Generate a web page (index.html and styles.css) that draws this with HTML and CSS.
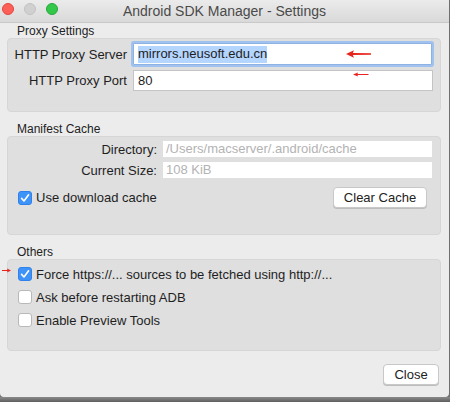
FILE: index.html
```html
<!DOCTYPE html>
<html>
<head>
<meta charset="utf-8">
<link rel="stylesheet" href="styles.css">
</head>
<body>
<div class="window">
  <div class="titlebar">
    <div class="lights">
      <span class="light red"></span>
      <span class="light gray"></span>
      <span class="light green"></span>
    </div>
    <div class="title">Android SDK Manager - Settings</div>
  </div>
  <div class="content">
    <div class="legend">Proxy Settings</div>
    <div class="group proxy">
      <label class="flabel">HTTP Proxy Server</label>
      <div class="field focused"><span class="sel">mirrors.neusoft.edu.cn</span></div>
      <label class="flabel">HTTP Proxy Port</label>
      <div class="field">80</div>
    </div>

    <div class="legend">Manifest Cache</div>
    <div class="group cache">
      <div class="cache-grid">
        <label class="flabel">Directory:</label>
        <div class="field disabled">/Users/macserver/.android/cache</div>
        <label class="flabel">Current Size:</label>
        <div class="field disabled">108 KiB</div>
      </div>
      <div class="cache-row">
        <div class="check-row"><span class="cb checked"><svg viewBox="0 0 14 14" width="14" height="14"><path d="M3.6 7.4 L6 10 L10.6 3.8" fill="none" stroke="#fff" stroke-width="1.6" stroke-linecap="round" stroke-linejoin="round"/></svg></span><span>Use download cache</span></div>
        <button class="btn clear">Clear Cache</button>
      </div>
    </div>

    <div class="legend">Others</div>
    <div class="group others">
      <div class="check-row"><span class="cb checked"><svg viewBox="0 0 14 14" width="14" height="14"><path d="M3.6 7.4 L6 10 L10.6 3.8" fill="none" stroke="#fff" stroke-width="1.6" stroke-linecap="round" stroke-linejoin="round"/></svg></span><span>Force https://... sources to be fetched using http://...</span></div>
      <div class="check-row"><span class="cb"></span><span>Ask before restarting ADB</span></div>
      <div class="check-row"><span class="cb"></span><span>Enable Preview Tools</span></div>
    </div>

    <div class="footer"><button class="btn close">Close</button></div>
  </div>

  <svg class="arrow a1" width="26" height="8" viewBox="0 0 26 8"><path d="M0 4 L8 0.3 L6.8 3 L25 3.2 L25 4.8 L6.8 5 L8 7.7 Z" fill="#e8231b"/></svg>
  <svg class="arrow a2" width="16" height="5" viewBox="0 0 16 5"><path d="M0 2.5 L5 0.6 L4.5 2 L15.5 2 L15.5 3 L4.5 3 L5 4.4 Z" fill="#e8231b"/></svg>
  <svg class="arrow a3" width="9" height="5" viewBox="0 0 9 5"><path d="M9 2.5 L5 0.6 L5.4 2 L0 2 L0 3 L5.4 3 L5 4.4 Z" fill="#e8231b"/></svg>
</div>
<div class="shadow"></div>
</body>
</html>
```
FILE: styles.css
```css
html, body {
  margin: 0;
  padding: 0;
  background: #6f6f6f;
}
body {
  width: 450px;
  height: 402px;
  overflow: hidden;
  font-family: "Liberation Sans", Arial, sans-serif;
  font-size: 13px;
  color: #1e1e1e;
}
.window {
  position: relative;
  width: 449px;
  height: 397px;
  background: #ececec;
  border-radius: 0 0 4px 4px;
  display: flex;
  flex-direction: column;
}
.titlebar {
  height: 22px;
  border-bottom: 1px solid #c9c9c9;
  background: linear-gradient(#ebebeb, #d9d9d9);
  display: flex;
  align-items: center;
  position: relative;
}
.lights {
  display: flex;
  gap: 10px;
  padding-left: 2px;
  margin-top: -4px;
}
.light {
  width: 12px;
  height: 12px;
  border-radius: 50%;
  box-sizing: border-box;
}
.light.red { background: #fc5f57; border: 1px solid #e2463f; }
.light.gray { background: #d0d0d0; border: 1px solid #c2c2c2; }
.light.green { background: #34c84a; border: 1px solid #28a73a; }
.title {
  position: absolute;
  left: 0;
  right: 0;
  top: 3px;
  text-align: center;
  font-size: 14px;
  color: #4a4a4a;
}
.content {
  flex: 1;
  display: flex;
  flex-direction: column;
  padding: 1px 8px 0 7px;
}
.legend {
  font-size: 12px;
  line-height: 14px;
  padding-left: 10px;
  height: 14px;
  color: #222;
}
.group {
  background: #dfdfdf;
  border: 1px solid #d6d6d6;
  border-radius: 4px;
  box-sizing: border-box;
  width: 434px;
}
.proxy {
  height: 74px;
  display: grid;
  grid-template-columns: 119px 1fr;
  column-gap: 6px;
  row-gap: 5px;
  align-content: start;
  padding: 4px 7px 0 0;
  margin-bottom: 10px;
}
.flabel {
  text-align: right;
  align-self: center;
  white-space: nowrap;
}
.field {
  background: #fff;
  border: 1px solid #c4c4c4;
  height: 21px;
  box-sizing: border-box;
  padding: 0 4px;
  line-height: 19px;
  font-size: 13px;
  white-space: nowrap;
  overflow: hidden;
}
.field.focused {
  height: 22px;
  border: 1px solid #8db2e3;
  box-shadow: 0 0 0 2px #9fc2ee;
  border-radius: 1px;
  margin-right: 1px;
  line-height: 20px;
}
.sel {
  background: #b4d5fe;
  padding: 0 0 2px 0;
}
.cache {
  height: 99px;
  padding: 4px 8px 0 0;
  margin-bottom: 10px;
}
.cache-grid {
  display: grid;
  grid-template-columns: 149px 1fr;
  column-gap: 6px;
  row-gap: 5px;
}
.field.disabled {
  border: none;
  height: 16px;
  line-height: 16px;
  color: #b3b3b3;
  padding-left: 3px;
}
.cache-row {
  display: flex;
  justify-content: space-between;
  align-items: center;
  margin-top: 9px;
  padding-left: 10px;
  margin-right: 5px;
}
.check-row {
  display: flex;
  align-items: center;
  gap: 4px;
  height: 14px;
  white-space: nowrap;
}
.cb {
  width: 14px;
  height: 14px;
  box-sizing: border-box;
  border-radius: 3px;
  background: #fff;
  border: 1px solid #b8b8b8;
  display: inline-block;
  flex: none;
}
.cb.checked {
  background: #3e93f8;
  border: 1px solid #2f82ea;
}
.cb svg { display: block; margin: -1px; }
.btn {
  font-family: "Liberation Sans", Arial, sans-serif;
  font-size: 13px;
  color: #222;
  background: #fff;
  border: 1px solid #c8c8c8;
  border-radius: 4px;
  box-shadow: 0 1px 0 #bdbdbd;
  height: 21px;
  padding: 0;
  line-height: 19px;
}
.clear { width: 94px; }
.others {
  height: 92px;
  padding: 7px 0 0 10px;
  display: flex;
  flex-direction: column;
  gap: 9px;
}
.footer {
  display: flex;
  justify-content: flex-end;
  padding-top: 13px;
  padding-right: 2px;
}
.close { width: 56px; }
.arrow { position: absolute; }
.a1 { left: 346px; top: 50px; }
.a2 { left: 353px; top: 72px; }
.a3 { left: 2px; top: 268px; }
.shadow {
  height: 5px;
  background: linear-gradient(#8a8a8a, #5f5f5f);
}
```
